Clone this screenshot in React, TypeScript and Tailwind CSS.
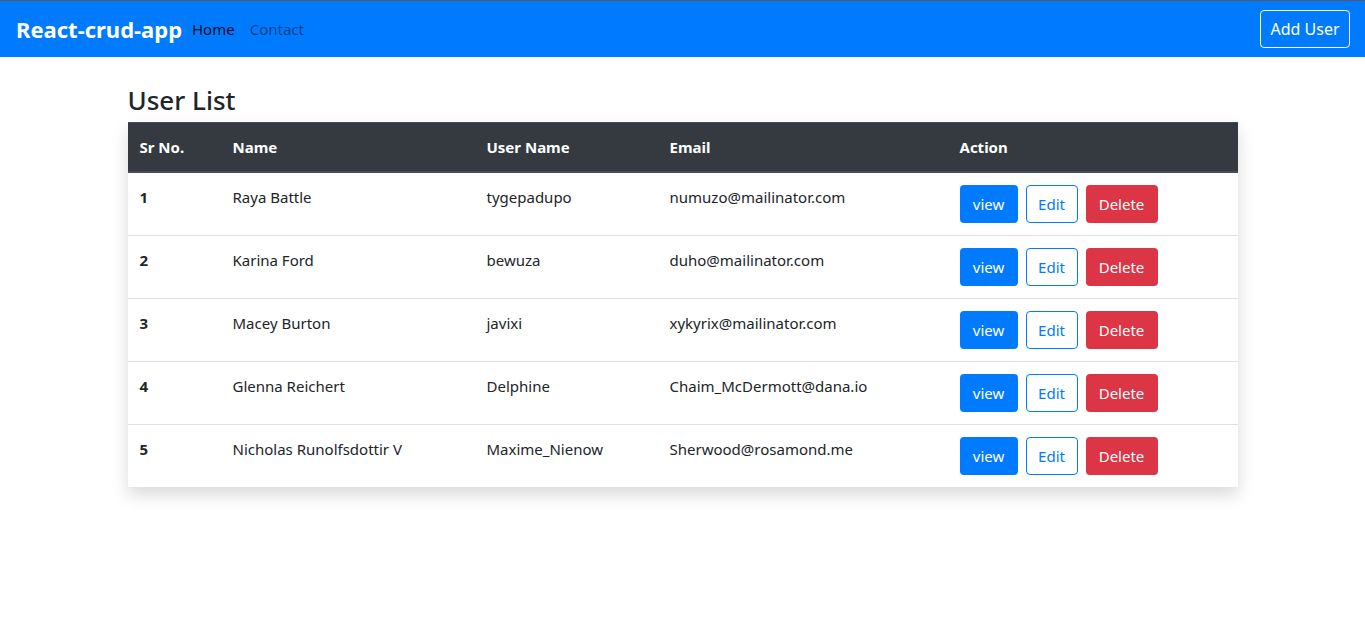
import React from 'react'

const users = [
  { id: 1, name: 'Raya Battle', username: 'tygepadupo', email: 'numuzo@mailinator.com' },
  { id: 2, name: 'Karina Ford', username: 'bewuza', email: 'duho@mailinator.com' },
  { id: 3, name: 'Macey Burton', username: 'javixi', email: 'xykyrix@mailinator.com' },
  { id: 4, name: 'Glenna Reichert', username: 'Delphine', email: 'Chaim_McDermott@dana.io' },
  { id: 5, name: 'Nicholas Runolfsdottir V', username: 'Maxime_Nienow', email: 'Sherwood@rosamond.me' },
]

export default function App() {
  return (
    <div className="min-h-screen bg-white text-[#212529] text-[15px] leading-6 font-['Noto_Sans',sans-serif]">
      {/* Navbar */}
      <nav className="h-[57px] bg-[#007bff] border-t border-[#5a5a5a] flex items-center justify-between pl-4 pr-[15px]">
        <div className="flex items-center">
          <a className="text-white text-[22px] font-bold leading-[30px] w-[176px]">React-crud-app</a>
          <a className="text-black/90 leading-6">Home</a>
          <a className="text-black/50 ml-[15px] leading-6">Contact</a>
        </div>
        <button className="h-[38px] w-[90px] border border-white rounded text-white leading-6 text-[16px]">Add User</button>
      </nav>

      {/* Main */}
      <main className="w-[1110px] mx-auto pt-6">
        <h2 className="text-[26px] font-medium leading-[38px] mb-[3px]">User List</h2>
        <table className="w-full table-fixed border-collapse shadow-[0_8px_16px_rgba(0,0,0,0.15)]">
          <thead>
            <tr className="bg-[#343a40] text-white border-t border-b-2 border-[#454d55]">
              <th className="w-[93px] p-3 text-left font-bold">Sr No.</th>
              <th className="w-[254px] p-3 text-left font-bold">Name</th>
              <th className="w-[183px] p-3 text-left font-bold">User Name</th>
              <th className="w-[290px] p-3 text-left font-bold">Email</th>
              <th className="p-3 text-left font-bold">Action</th>
            </tr>
          </thead>
          <tbody>
            {users.map((u, i) => (
              <tr key={u.id} className={i > 0 ? 'border-t border-[#dee2e6]' : ''}>
                <td className="p-3 align-top font-bold">{u.id}</td>
                <td className="p-3 align-top">{u.name}</td>
                <td className="p-3 align-top">{u.username}</td>
                <td className="p-3 align-top">{u.email}</td>
                <td className="p-3 align-top">
                  <div className="flex gap-2">
                    <button className="h-[38px] w-[58px] rounded bg-[#007bff] text-white">view</button>
                    <button className="h-[38px] w-[52px] rounded border border-[#007bff] text-[#007bff]">Edit</button>
                    <button className="h-[38px] w-[72px] rounded bg-[#dc3545] text-white">Delete</button>
                  </div>
                </td>
              </tr>
            ))}
          </tbody>
        </table>
      </main>
    </div>
  )
}
